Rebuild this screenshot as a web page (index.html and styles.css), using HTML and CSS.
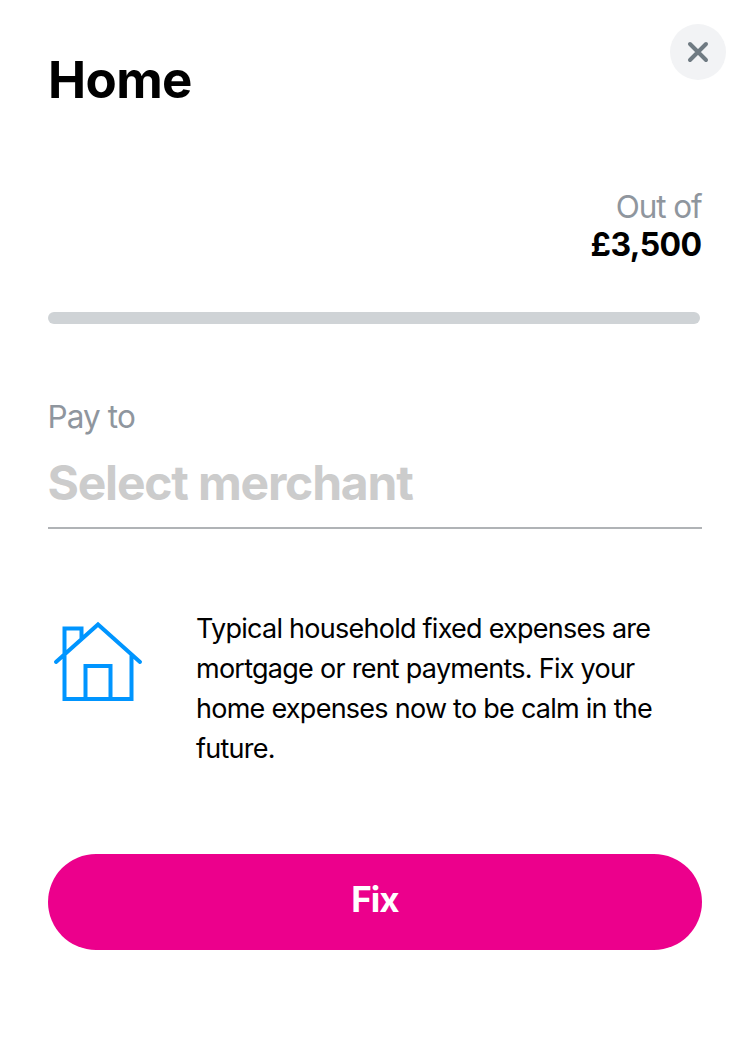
FILE: index.html
```html
<!DOCTYPE html>
<html lang="en">
<head>
<meta charset="utf-8">
<title>Home</title>
<link rel="stylesheet" href="styles.css">
</head>
<body>
<main class="sheet">
  <header class="header">
    <h1 class="title">Home</h1>
    <button class="close" aria-label="Close">
      <svg width="56" height="56" viewBox="0 0 56 56"><path d="M20 20 36 36M36 20 20 36"/></svg>
    </button>
  </header>
  <section class="limit">
    <span class="limit-label">Out of</span>
    <strong class="limit-value">£3,500</strong>
  </section>
  <div class="progress"></div>
  <section class="payee">
    <label class="payee-label">Pay to</label>
    <div class="payee-field">Select merchant</div>
  </section>
  <section class="info">
    <svg class="house" width="96" height="96" viewBox="0 0 96 96"><path d="M8 48 50 10.500 92 48M16.500 41V85H83.500V41M16.500 41V14.500H33.500V24M37.500 85V52H62.500V85"/></svg>
    <p class="info-text"><span>Typical household fixed expenses are</span><span>mortgage or rent payments. Fix your</span><span>home expenses now to be calm in the</span><span>future.</span></p>
  </section>
  <button class="fix">Fix</button>
</main>
</body>
</html>
```
FILE: styles.css
```css
* { box-sizing: border-box; }
body { margin: 0; background: #fff; color: #000; font-family: Inter, "Liberation Sans", sans-serif; }
button { border: 0; padding: 0; font-family: inherit; }
.sheet { display: flex; flex-direction: column; height: 1046px; padding: 24px 48px 0; }
.header { display: flex; justify-content: space-between; height: 164px; margin-right: -24px; }
.title { margin: 24px 0 0; font-size: 51px; line-height: 64px; font-weight: 700; letter-spacing: -.6px; }
.close { width: 56px; height: 56px; border-radius: 50%; background: #f2f3f5; }
.close svg { display: block; fill: none; stroke: #6f7a82; stroke-width: 4; stroke-linecap: round; }
.limit { display: flex; flex-direction: column; align-items: flex-end; height: 124px; }
.limit-label { font-size: 31.5px; line-height: 38px; color: #8f969e; letter-spacing: -1.1px; margin-right: .5px; }
.limit-value { font-size: 32px; line-height: 38px; font-weight: 700; letter-spacing: -.6px; margin-right: .5px; }
.progress { width: 652px; height: 12px; border-radius: 6px; background: #cfd3d6; }
.payee { display: flex; flex-direction: column; margin-top: 72px; height: 133px; border-bottom: 2px solid #b0b3b6; }
.payee-label { margin-left: -.5px; font-size: 31.5px; line-height: 42px; color: #8f969e; letter-spacing: -.9px; }
.payee-field { margin: 13px 0 0 -.5px; font-size: 48px; line-height: 64px; font-weight: 700; letter-spacing: -1.2px; color: #ccc; }
.info { display: flex; margin-top: 80px; height: 245px; }
.house { margin-top: 5px; fill: none; stroke: #0095ff; stroke-width: 4; stroke-linecap: round; }
.info-text { display: flex; flex-direction: column; align-items: flex-start; margin: 0 0 0 52px; font-size: 27px; line-height: 40px; letter-spacing: -.74px; white-space: nowrap; }
.fix { height: 96px; border-radius: 48px; background: #ec008c; color: #fff; font-size: 35px; line-height: 42px; font-weight: 700; padding-bottom: 6px; letter-spacing: -1px; }
```
